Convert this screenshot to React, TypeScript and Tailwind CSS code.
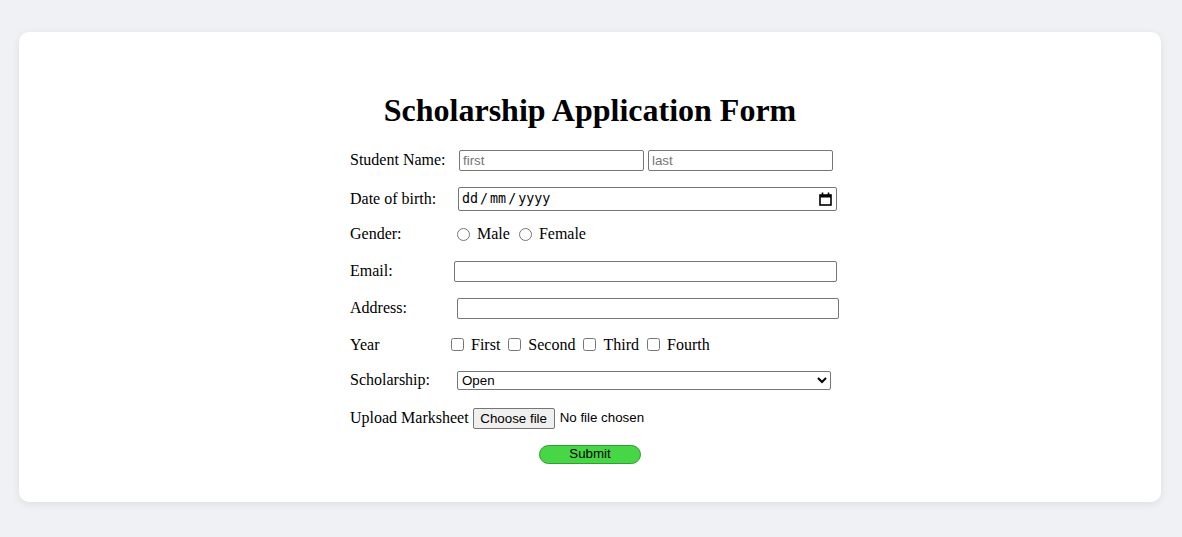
import React from "react";

const serif = { fontFamily: '"Liberation Serif", "Times New Roman", serif' };

const inputCls =
  "h-[21px] shrink-0 border border-[#767676] rounded-[2px] bg-white px-[3px] text-[13.33px] text-black placeholder:text-[#757575] outline-none";
const inputFont = { fontFamily: '"Liberation Sans", Arial, sans-serif' };

export default function App() {
  return (
    <div className="min-h-[537px] w-full bg-[#f0f1f5] pt-[32px]" style={serif}>
      <div className="ml-[19px] h-[470px] w-[1142px] rounded-[10px] bg-white shadow-[0_2px_8px_rgba(0,0,0,0.08)] pt-[60px] text-[16px] text-black">
        <h1 className="text-center text-[32px] font-bold leading-[37px]">
          Scholarship Application Form
        </h1>
        <div className="mx-auto w-[480px]">
          {/* Student Name */}
          <div className="mt-[19px] flex h-[24px] items-center">
            <span className="w-[109px] shrink-0">Student Name:</span>
            <input className={inputCls + " w-[185px]"} style={inputFont} placeholder="first" />
            <input className={inputCls + " ml-[4px] w-[185px]"} style={inputFont} placeholder="last" />
          </div>
          {/* DOB */}
          <div className="mt-[14.5px] flex h-[24px] items-center">
            <span className="w-[108px] shrink-0">Date of birth:</span>
            <div className="flex h-[24px] w-[379px] shrink-0 items-center justify-between rounded-[2px] border border-[#767676] bg-white pl-[3px] pr-[4px] text-[13.33px] text-black">
              <span style={{ fontFamily: '"DejaVu Sans Mono", monospace' }}>
                dd<span className="mx-[2px]">/</span>mm<span className="mx-[2px]">/</span>yyyy
              </span>
              <svg width="13" height="14" viewBox="0 0 13 14" fill="none">
                <rect x="1" y="3" width="11" height="10" stroke="#000" strokeWidth="1.6" />
                <rect x="1" y="3" width="11" height="2.5" fill="#000" />
                <line x1="3.5" y1="0.5" x2="3.5" y2="3" stroke="#000" strokeWidth="1.6" />
                <line x1="9.5" y1="0.5" x2="9.5" y2="3" stroke="#000" strokeWidth="1.6" />
              </svg>
            </div>
          </div>
          {/* Gender */}
          <div className="mt-[11.5px] flex h-[24px] items-center">
            <span className="w-[107px] shrink-0">Gender:</span>
            <input type="radio" name="g" className="m-0 h-[13px] w-[13px]" />
            <span className="ml-[7px]">Male</span>
            <input type="radio" name="g" className="m-0 ml-[9px] h-[13px] w-[13px]" />
            <span className="ml-[7px]">Female</span>
          </div>
          {/* Email */}
          <div className="mt-[13px] flex h-[24px] items-center">
            <span className="w-[104px] shrink-0">Email:</span>
            <input className={inputCls + " w-[383px]"} style={inputFont} />
          </div>
          {/* Address */}
          <div className="mt-[13px] flex h-[24px] items-center">
            <span className="w-[107px] shrink-0">Address:</span>
            <input className={inputCls + " w-[382px]"} style={inputFont} />
          </div>
          {/* Year */}
          <div className="mt-[12.5px] flex h-[24px] items-center">
            <span className="w-[101px] shrink-0">Year</span>
            <input type="checkbox" className="m-0 h-[13px] w-[13px]" />
            <span className="ml-[7px]">First</span>
            <input type="checkbox" className="m-0 ml-[8px] h-[13px] w-[13px]" />
            <span className="ml-[7px]">Second</span>
            <input type="checkbox" className="m-0 ml-[8px] h-[13px] w-[13px]" />
            <span className="ml-[7px]">Third</span>
            <input type="checkbox" className="m-0 ml-[8px] h-[13px] w-[13px]" />
            <span className="ml-[7px]">Fourth</span>
          </div>
          {/* Scholarship */}
          <div className="mt-[11.5px] flex h-[24px] items-center">
            <span className="w-[107px] shrink-0">Scholarship:</span>
            <select
              className="h-[19px] w-[374px] shrink-0 rounded-[2px] border border-[#767676] bg-white text-[13.33px] text-black"
              style={inputFont}
              defaultValue="Open"
            >
              <option>Open</option>
              <option>OBC</option>
              <option>SC/ST</option>
            </select>
          </div>
          {/* Upload */}
          <div className="mt-[14px] flex h-[24px] items-center">
            <span className="shrink-0">Upload Marksheet</span>
            <button
              type="button"
              className="ml-[4px] h-[21px] w-[82px] shrink-0 rounded-[2px] border border-[#767676] bg-[#efefef] text-[13.33px] text-black"
              style={inputFont}
            >
              Choose file
            </button>
            <span className="ml-[5px] text-[13.33px]" style={inputFont}>
              No file chosen
            </span>
          </div>
          {/* Submit */}
          <div className="mt-[12px] flex h-[24px] items-center justify-center">
            <button
              className="h-[19px] w-[102px] rounded-full border border-[#2f9d2f] bg-[#46d646] text-[13.33px] leading-none text-black"
              style={inputFont}
            >
              Submit
            </button>
          </div>
        </div>
      </div>
    </div>
  );
}
